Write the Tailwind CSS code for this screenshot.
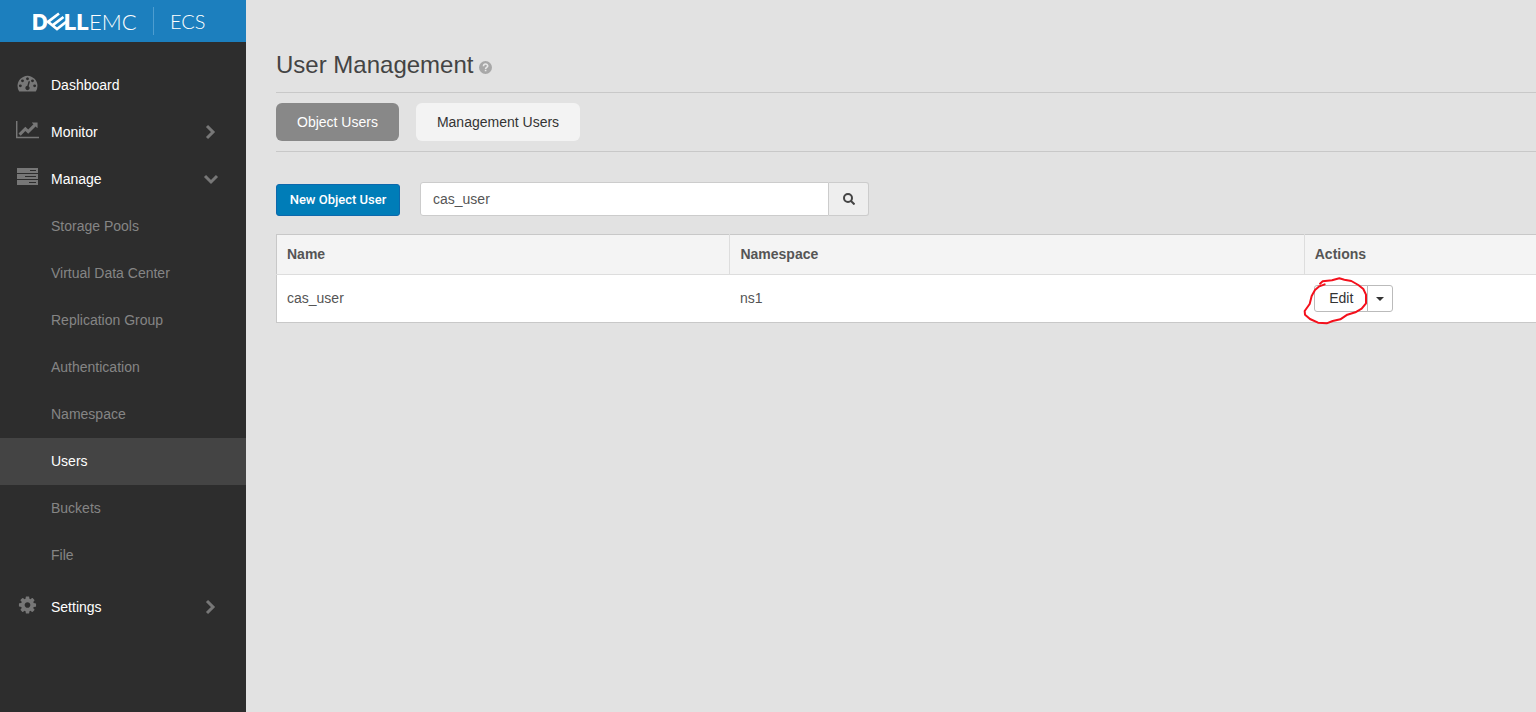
<!DOCTYPE html>
<html lang="en">
<head>
  <meta charset="UTF-8">
  <meta name="viewport" content="width=device-width, initial-scale=1.0">
  <title>ECS - User Management</title>
  <script src="https://cdn.jsdelivr.net/npm/@tailwindcss/browser@4"></script>
</head>
<body class="bg-[#e2e2e2] font-['Liberation_Sans',Arial,sans-serif] text-sm text-[#444]">
  <div class="flex min-h-screen">
    <aside class="w-[246px] shrink-0 bg-[#2d2d2d]">
      <!-- brand -->
      <div class="h-[42px] bg-[#1c7fbe] pl-[33px] flex items-center text-white">
        <svg class="w-[106px] h-[42px]" viewBox="0 0 106 42" fill="#fff" role="img" aria-label="Dell EMC">
          <text x="-1" y="30" font-family="Inter, sans-serif" font-weight="800" font-size="22">D</text>
          <path d="M26 13.500L15 21.800l9 7.200 10-7.800M19.500 25.400L30.500 17" fill="none" stroke="#fff" stroke-width="2.700"/>
          <text x="31" y="30" font-family="Inter, sans-serif" font-weight="800" font-size="22">LL</text>
          <text x="56" y="30" font-family="Lato, sans-serif" font-weight="300" font-size="22">EMC</text>
        </svg>
        <span class="ml-3.5 h-7 border-l border-[#4d9dd0] pl-4 flex items-center font-['Lato',sans-serif] text-xl font-light">ECS</span>
      </div>
      <!-- menu -->
      <nav class="pt-5 text-white">
        <a href="#" class="flex items-center h-[47px] pl-4 pr-[27px] pb-0.5">
          <svg class="w-[23px] h-5 mr-3 mb-1" viewBox="0 0 1792 1792" fill="#777"><path d="M384 1152q0-53-37.500-90.500t-90.500-37.500-90.500 37.500-37.500 90.500 37.500 90.500 90.500 37.500 90.500-37.500 37.500-90.500zm192-448q0-53-37.500-90.500t-90.500-37.500-90.500 37.500-37.500 90.500 37.500 90.500 90.500 37.500 90.500-37.500 37.500-90.500zm428 481l101-382q6-26-7.500-48.500t-38.500-29.500-48 6.500-30 39.500l-101 382q-60 5-107 43.500t-63 98.500q-20 77 20 146t117 89 146-20 89-117q16-60-6-117t-72-91zm660-33q0-53-37.500-90.500t-90.500-37.500-90.500 37.500-37.500 90.500 37.500 90.500 90.500 37.500 90.500-37.500 37.500-90.500zm-640-640q0-53-37.500-90.500t-90.500-37.500-90.500 37.500-37.500 90.500 37.500 90.500 90.500 37.500 90.500-37.500 37.500-90.500zm448 192q0-53-37.500-90.500t-90.500-37.500-90.500 37.500-37.500 90.500 37.500 90.500 90.500 37.500 90.500-37.500 37.500-90.500zm320 448q0 261-141 483-19 29-54 29h-1402q-35 0-54-29-141-221-141-483 0-182 71-348t191-286 286-191 348-71 348 71 286 191 191 286 71 348z"/></svg>
          Dashboard
        </a>
        <a href="#" class="flex items-center h-[47px] pl-4 pr-[27px] pb-0.5">
          <svg class="w-[23px] h-6 mr-3 mb-0.5" viewBox="0 0 2048 2048" fill="#777"><path d="M2048 1536v128h-2048v-1536h128v1408h1920zm-128-1248v435q0 21-19.500 29.500t-35.500-7.500l-121-121-633 633q-10 10-23 10t-23-10l-233-233-416 416-192-192 585-585q10-10 23-10t23 10l233 233 464-464-121-121q-16-16-7.500-35.500t29.500-19.500h435q14 0 23 9t9 23z"/></svg>
          Monitor
          <svg class="w-4 h-4 ml-auto" viewBox="0 0 16 16" fill="none" stroke="#777" stroke-width="3"><path d="M4 2l6 6-6 6"/></svg>
        </a>
        <a href="#" class="flex items-center h-[47px] pl-4 pr-[27px] pb-0.5">
          <svg class="w-[23px] h-[22px] mr-3" viewBox="0 0 23 22"><path fill="#777" d="M1 0h21v5H1zM1 6h21v5H1zM1 12h21v5H1z"/><path stroke="#2d2d2d" d="M14 2.500h6M9 8.500h11M13 14.500h7"/></svg>
          Manage
          <svg class="w-4 h-4 ml-auto" viewBox="0 0 16 16" fill="none" stroke="#777" stroke-width="3"><path d="M2 5l6 6 6-6"/></svg>
        </a>
        <div class="mb-[5px] text-[#858585]">
          <a href="#" class="flex items-center h-[47px] pl-[51px] pb-0.5">Storage Pools</a>
          <a href="#" class="flex items-center h-[47px] pl-[51px] pb-0.5">Virtual Data Center</a>
          <a href="#" class="flex items-center h-[47px] pl-[51px] pb-0.5">Replication Group</a>
          <a href="#" class="flex items-center h-[47px] pl-[51px] pb-0.5">Authentication</a>
          <a href="#" class="flex items-center h-[47px] pl-[51px] pb-0.5">Namespace</a>
          <a href="#" class="flex items-center h-[47px] pl-[51px] pb-0.5 bg-[#444] text-white">Users</a>
          <a href="#" class="flex items-center h-[47px] pl-[51px] pb-0.5">Buckets</a>
          <a href="#" class="flex items-center h-[47px] pl-[51px] pb-0.5">File</a>
        </div>
        <a href="#" class="flex items-center h-[47px] pl-4 pr-[27px] pb-0.5">
          <svg class="w-[23px] h-5 mr-3 mb-1" viewBox="0 0 1792 1792" fill="#777"><path d="M1152 896q0-106-75-181t-181-75-181 75-75 181 75 181 181 75 181-75 75-181zm512-109v222q0 12-8 23t-20 13l-185 28q-19 54-39 91 35 50 107 138 10 12 10 25t-9 23q-27 37-99 108t-94 71q-12 0-26-9l-138-108q-44 23-91 38-16 136-29 186-7 28-36 28h-222q-14 0-24.500-8.500t-11.500-21.500l-28-184q-49-16-90-37l-141 107q-10 9-25 9-14 0-25-11-126-114-165-168-7-10-7-23 0-12 8-23 15-21 51-66.500t54-70.500q-27-50-41-99l-183-27q-13-2-21-12.500t-8-23.500v-222q0-12 8-23t19-13l186-28q14-46 39-92-40-57-107-138-10-12-10-24 0-10 9-23 26-36 98.500-107.500t94.500-71.500q13 0 26 10l138 107q44-23 91-38 16-136 29-186 7-28 36-28h222q14 0 24.500 8.500t11.500 21.500l28 184q49 16 90 37l142-107q9-9 24-9 13 0 25 10 129 119 165 170 7 8 7 22 0 12-8 23-15 21-51 66.500t-54 70.500q26 50 41 98l183 28q13 2 21 12.500t8 23.500z"/></svg>
          Settings
          <svg class="w-4 h-4 ml-auto" viewBox="0 0 16 16" fill="none" stroke="#777" stroke-width="3"><path d="M4 2l6 6-6 6"/></svg>
        </a>
      </nav>
    </aside>

    <main class="flex-1 min-w-0 pl-[30px] pt-12">
      <div class="flex items-center h-[45px] pb-2.5 border-b border-[#c8c8c8]">
        <h1 class="text-2xl">User Management</h1>
        <button type="button" aria-label="Help" class="ml-1.5 mt-1">
          <svg class="w-[13px] h-[13px]" viewBox="0 0 13 13"><circle cx="6.500" cy="6.500" r="6.500" fill="#a8a8a8"/><path d="M4.500 5.200c0-2.900 4.200-2.700 4.200-.3 0 1.500-2.100 1.400-2.100 3M6.600 8.700v1.600" fill="none" stroke="#e8e8e8" stroke-width="1.600"/></svg>
        </button>
      </div>
      <div class="flex gap-[17px] py-2.5 border-b border-[#c8c8c8]">
        <button type="button" class="h-[38px] px-[21px] rounded-md bg-[#888] text-white">Object Users</button>
        <button type="button" class="h-[38px] px-[21px] rounded-md bg-[#f3f3f3] text-[#333]">Management Users</button>
      </div>

      <div class="flex items-center mt-[30px]">
        <button type="button" class="h-8 w-[124px] mt-0.5 rounded-[3px] border border-[#0d68ac] bg-[#007db8] font-['Roboto',sans-serif] text-[13px] font-medium text-white">New Object User</button>
        <form class="flex ml-5">
          <input type="text" aria-label="Search users" value="cas_user" class="w-[409px] h-[34px] px-3 rounded-l-[3px] border border-[#ccc] bg-white text-[#555]">
          <button type="button" aria-label="Search" class="w-10 h-[34px] flex items-center justify-center rounded-r-[3px] border border-l-0 border-[#ccc] bg-[#eee]">
            <svg class="w-3 h-3" viewBox="0 0 12 12" fill="none" stroke="#444" stroke-width="2"><circle cx="5" cy="5" r="4"/><path d="M8 8l3.500 3.500"/></svg>
          </button>
        </form>
      </div>

      <table class="table-fixed w-full mt-[18px] border-collapse border border-r-0 border-[#c8c8c8] bg-white text-left text-[#555]">
        <thead class="bg-[#f4f4f4]">
          <tr class="h-10 border-b border-[#ddd]">
            <th class="w-[36%] px-2.5 pb-0.5 font-bold">Name</th>
            <th class="w-[45.6%] px-2.5 pb-0.5 font-bold border-l border-[#ddd]">Namespace</th>
            <th class="px-2.5 pb-0.5 font-bold border-l border-[#ddd]">Actions</th>
          </tr>
        </thead>
        <tbody>
          <tr class="h-12">
            <td class="px-2.5 pb-0.5">cas_user</td>
            <td class="px-2.5 pb-0.5">ns1</td>
            <td class="px-2.5">
              <div class="relative flex text-[#333]">
                <button type="button" class="w-[54px] h-[27px] pb-0.5 rounded-l-[3px] border border-[#bbb]">Edit</button>
                <button type="button" aria-label="More actions" class="w-[26px] h-[27px] -ml-px flex items-center justify-center rounded-r-[3px] border border-[#bbb]">
                  <svg class="w-2 h-1" viewBox="0 0 8 4" fill="#333"><path d="M0 0h8L4 4z"/></svg>
                </button>
                <!-- red pen mark around Edit -->
                <svg class="absolute -left-3 -top-2.5 w-[68px] h-[50px] pointer-events-none" viewBox="36 150 204 150" fill="none" stroke="#f4101c" stroke-width="6" stroke-linecap="round" stroke-linejoin="round"><path d="M90 176L98 169L126 166L148 160L163 164L184 168L205 180L220 192L228 209V235L215 251L196 262L172 269L151 283L128 288L110 295L84 293L60 282L45 269L44 258L59 237L65 213L75 195L88 184L104 178"/></svg>
              </div>
            </td>
          </tr>
        </tbody>
      </table>
    </main>
  </div>
</body>
</html>
